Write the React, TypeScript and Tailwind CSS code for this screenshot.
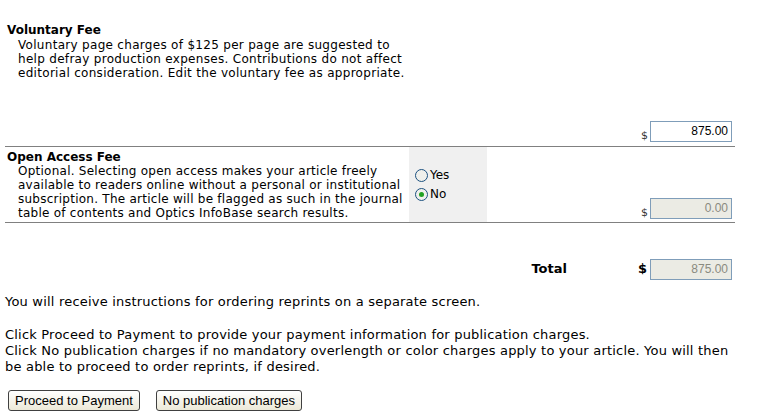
const verdana = "font-['DejaVu_Sans',Verdana,sans-serif]";
const tahoma = "font-['DejaVu_Sans',Tahoma,sans-serif]";

const FeeInput = ({ value, disabled }: { value: string; disabled?: boolean }) => (
  <div
    className={`w-[82px] h-[21px] border border-[#7f9db9] text-right pr-[3px] text-[12px] leading-[19px] font-['Liberation_Sans',Arial,sans-serif] ${
      disabled ? "bg-[#ebebe4] text-[#8a8a80]" : "bg-white text-black"
    }`}
  >
    {value}
  </div>
);

const Radio = ({ checked }: { checked?: boolean }) => (
  <span className="inline-flex w-[13px] h-[13px] rounded-full border border-[#1c5180] bg-[#f0f0ec] items-center justify-center mr-[2px]">
    {checked && <span className="w-[5px] h-[5px] rounded-full bg-[#21a121]" />}
  </span>
);

const Button = ({ children }: { children: string }) => (
  <button className="h-[21px] px-[6px] border border-[#404040] rounded-[3px] bg-gradient-to-b from-white to-[#ece9d8] text-[13px] leading-[18px] font-['Liberation_Sans',Arial,sans-serif]">
    {children}
  </button>
);

export default function App() {
  return (
    <div className="w-[772px] h-[420px] bg-white text-black overflow-hidden">
      <div className="w-[730px] ml-[5px] pt-[23px]">
        {/* voluntary fee */}
        <div className="flex border-b border-[#808080] h-[124px]">
          <div className={`w-[404px] pl-[2px] ${verdana} text-[12px] leading-[14px] whitespace-nowrap`}>
            <div className="font-bold">Voluntary Fee</div>
            <p className="pl-[11px] pt-[1px] tracking-[0.3px]">
              Voluntary page charges of $125 per page are suggested to
              <br />
              help defray production expenses. Contributions do not affect
              <br />
              editorial consideration. Edit the voluntary fee as appropriate.
            </p>
          </div>
          <div className="w-[78px]" />
          <div className="flex-1 flex items-end justify-end pr-[3px] pb-[4px]">
            <span className={`${verdana} text-[11px] text-[#333] mr-[2px] leading-[12px]`}>$</span>
            <FeeInput value="875.00" />
          </div>
        </div>

        {/* open access fee */}
        <div className="flex border-b border-[#808080] h-[76px]">
          <div className={`w-[404px] pl-[2px] pt-[3px] ${verdana} text-[12px] leading-[14px] whitespace-nowrap`}>
            <div className="font-bold">Open Access Fee</div>
            <p className="pl-[11px] tracking-[0.25px]">
              Optional. Selecting open access makes your article freely
              <br />
              available to readers online without a personal or institutional
              <br />
              subscription. The article will be flagged as such in the journal
              <br />
              table of contents and Optics InfoBase search results.
            </p>
          </div>
          <div className={`w-[78px] bg-[#f0f0f0] pt-[19px] pl-[6px] ${verdana} text-[12px] leading-[19px]`}>
            <label className="flex items-center">
              <Radio />
              Yes
            </label>
            <label className="flex items-center">
              <Radio checked />
              No
            </label>
          </div>
          <div className="flex-1 flex items-end justify-end pr-[3px] pb-[3px]">
            <span className={`${verdana} text-[11px] text-[#333] mr-[2px] leading-[12px]`}>$</span>
            <FeeInput value="0.00" disabled />
          </div>
        </div>

        {/* total */}
        <div className="flex items-center justify-end h-[36px] mt-[28px] pr-[3px]">
          <span className={`${verdana} font-bold text-[13px] mr-[71px]`}>Total</span>
          <span className={`${verdana} font-bold text-[13px] mr-[3px]`}>$</span>
          <FeeInput value="875.00" disabled />
        </div>
      </div>

      <div className={`px-[5px] mt-[7px] ${tahoma} text-[13px] leading-[16px] tracking-[0.2px] whitespace-nowrap`}>
        <p>You will receive instructions for ordering reprints on a separate screen.</p>
        <p className="mt-[17px]">Click Proceed to Payment to provide your payment information for publication charges.</p>
        <p>
          Click No publication charges if no mandatory overlength or color charges apply to your article. You will then
          <br />
          be able to proceed to order reprints, if desired.
        </p>
        <div className="flex gap-[16px] mt-[15px] pl-[3px] tracking-normal">
          <Button>Proceed to Payment</Button>
          <Button>No publication charges</Button>
        </div>
      </div>
    </div>
  );
}
